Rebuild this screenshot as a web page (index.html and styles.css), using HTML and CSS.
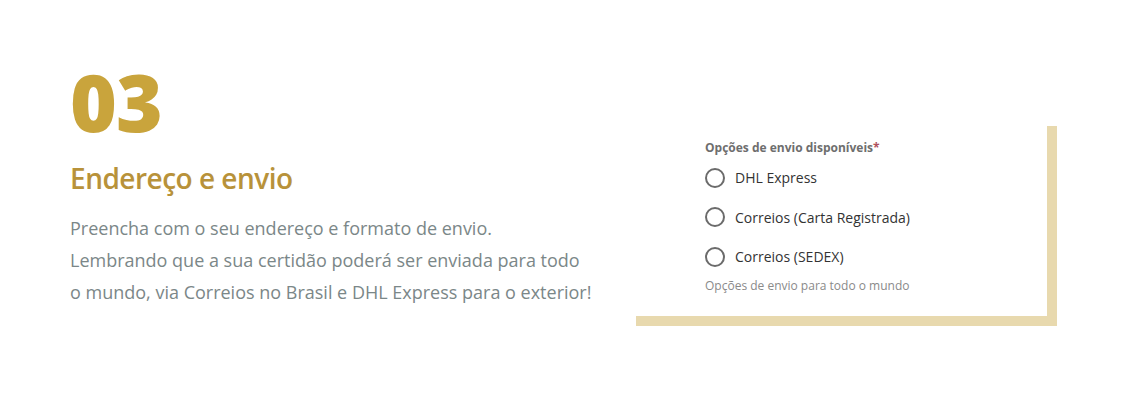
FILE: index.html
```html
<!DOCTYPE html>
<html lang="pt-BR">
<head>
    <meta charset="UTF-8">
    <meta name="viewport" content="width=device-width, initial-scale=1.0">
    <title>Endereço e envio</title>
    <link rel="stylesheet" href="styles.css">
</head>
<body>

    <div class="step-section">
        <!-- Step intro -->
        <div class="step-intro">
            <div class="step-number">03</div>
            <h2 class="step-title">Endereço e envio</h2>
            <p class="step-text">Preencha com o seu endereço e formato de envio.<br>
                Lembrando que a sua certidão poderá ser enviada para todo<br>
                o mundo, via Correios no Brasil e DHL Express para o exterior!</p>
        </div>

        <!-- Shipping form -->
        <div class="form-box">
            <div class="field-label">Opções de envio disponíveis<span class="required">*</span></div>
            <div class="radio-list">
                <label class="radio-option">
                    <input type="radio" name="envio" value="dhl">
                    <span class="radio-circle"></span>
                    DHL Express
                </label>
                <label class="radio-option">
                    <input type="radio" name="envio" value="carta">
                    <span class="radio-circle"></span>
                    Correios (Carta Registrada)
                </label>
                <label class="radio-option">
                    <input type="radio" name="envio" value="sedex">
                    <span class="radio-circle"></span>
                    Correios (SEDEX)
                </label>
            </div>
            <div class="field-help">Opções de envio para todo o mundo</div>
        </div>
    </div>

</body>
</html>
```

FILE: styles.css
```css
body {
    font-family: "Open Sans", Arial, sans-serif;
    background: #ffffff;
    margin: 0;
}
.step-section {
    display: flex;
    align-items: flex-start;
    padding: 61px 76px 0 70px;
}
.step-intro {
    flex: 1;
}
.step-number {
    font-size: 80px;
    font-weight: 800;
    line-height: 80px;
    color: #c9a43c;
    letter-spacing: -1px;
}
.step-title {
    font-size: 28px;
    font-weight: 600;
    line-height: 36px;
    color: #b8923a;
    letter-spacing: -0.5px;
    margin: 19px 0 0;
}
.step-text {
    font-size: 18px;
    line-height: 32px;
    color: #7b8788;
    margin: 16px 0 0;
}
.form-box {
    width: 342px;
    margin-top: 65px;
    padding: 14px 0 22px 69px;
    border-right: 10px solid #e8d9ae;
    border-bottom: 10px solid #e8d9ae;
}
.field-label {
    font-size: 12px;
    font-weight: 700;
    line-height: 16px;
    color: #6e6e6e;
}
.required {
    color: #b0505c;
}
.radio-list {
    display: flex;
    flex-direction: column;
    gap: 19.5px;
    margin-top: 11.5px;
}
.radio-option {
    display: flex;
    align-items: center;
    gap: 10px;
    height: 20px;
    font-size: 14px;
    color: #333333;
    cursor: pointer;
}
.radio-option input {
    display: none;
}
.radio-circle {
    width: 16px;
    height: 16px;
    border: 2px solid #6b6b6b;
    border-radius: 50%;
}
.field-help {
    font-size: 12px;
    line-height: 16px;
    color: #8a8a8a;
    margin-top: 11px;
}
```
